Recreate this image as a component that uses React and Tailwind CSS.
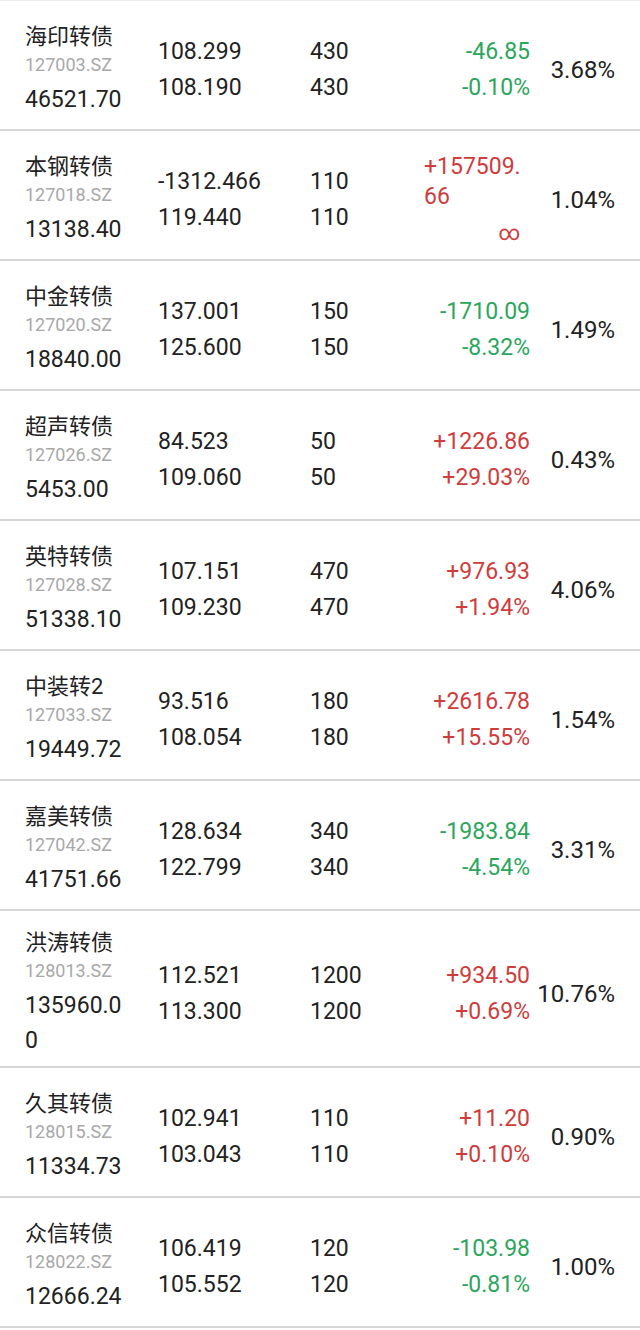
const rows = [
  { name: "海印转债", code: "127003.SZ", value: "46521.70", p1: "108.299", p2: "108.190", q: "430", c1: "-46.85", c2: "-0.10%", pct: "3.68%" },
  { name: "本钢转债", code: "127018.SZ", value: "13138.40", p1: "-1312.466", p2: "119.440", q: "110", c1: "+157509.66", c2: "∞", pct: "1.04%" },
  { name: "中金转债", code: "127020.SZ", value: "18840.00", p1: "137.001", p2: "125.600", q: "150", c1: "-1710.09", c2: "-8.32%", pct: "1.49%" },
  { name: "超声转债", code: "127026.SZ", value: "5453.00", p1: "84.523", p2: "109.060", q: "50", c1: "+1226.86", c2: "+29.03%", pct: "0.43%" },
  { name: "英特转债", code: "127028.SZ", value: "51338.10", p1: "107.151", p2: "109.230", q: "470", c1: "+976.93", c2: "+1.94%", pct: "4.06%" },
  { name: "中装转2", code: "127033.SZ", value: "19449.72", p1: "93.516", p2: "108.054", q: "180", c1: "+2616.78", c2: "+15.55%", pct: "1.54%" },
  { name: "嘉美转债", code: "127042.SZ", value: "41751.66", p1: "128.634", p2: "122.799", q: "340", c1: "-1983.84", c2: "-4.54%", pct: "3.31%" },
  { name: "洪涛转债", code: "128013.SZ", value: "135960.00", p1: "112.521", p2: "113.300", q: "1200", c1: "+934.50", c2: "+0.69%", pct: "10.76%" },
  { name: "久其转债", code: "128015.SZ", value: "11334.73", p1: "102.941", p2: "103.043", q: "110", c1: "+11.20", c2: "+0.10%", pct: "0.90%" },
  { name: "众信转债", code: "128022.SZ", value: "12666.24", p1: "106.419", p2: "105.552", q: "120", c1: "-103.98", c2: "-0.81%", pct: "1.00%" },
];

function Row({ r }) {
  const up = r.c1.startsWith("+");
  const color = up ? "text-[#cf3c3c]" : "text-[#2ba65c]";
  return (
    <div className="flex items-center min-h-[130px] pt-[18px] pb-[8px] pl-[25px] pr-[25px] border-b-2 border-[#d6d6d6]">
      {/* name + code + market value */}
      <div className="w-[104px] shrink-0">
        <div className="text-[22px] leading-[28px] text-[#222]">{r.name}</div>
        <div className="text-[18px] leading-[28px] text-[#a8a8a8]">{r.code}</div>
        <div className="mt-[3px] text-[23px] leading-[35px] text-[#222] break-all">{r.value}</div>
      </div>

      {/* prices */}
      <div className="ml-[29px] w-[152px] shrink-0 text-[23px] leading-[36px] text-[#222]">
        <div>{r.p1}</div>
        <div>{r.p2}</div>
      </div>

      {/* quantity */}
      <div className="w-[108px] shrink-0 text-[23px] leading-[36px] text-[#222]">
        <div>{r.q}</div>
        <div>{r.q}</div>
      </div>

      {/* profit / change */}
      <div className={`w-[112px] shrink-0 flex flex-col items-end ${color}`}>
        <div className="max-w-[106px] text-[23px] leading-[30px] py-[3px] break-all text-left">{r.c1}</div>
        {r.c2 === "∞" ? (
          <div className="text-[21px] leading-[36px] pr-[10px]">∞</div>
        ) : (
          <div className="text-[23px] leading-[30px] py-[3px]">{r.c2}</div>
        )}
      </div>

      {/* weight */}
      <div className="flex-1 text-right text-[24px] text-[#222]">{r.pct}</div>
    </div>
  );
}

export default function App() {
  return (
    <div className="w-[640px] min-h-[1330px] bg-white border-t border-[#ececec] font-[Roboto,'Noto_Sans_CJK_SC',sans-serif]">
      {rows.map((r) => (
        <Row key={r.code} r={r} />
      ))}
    </div>
  );
}
